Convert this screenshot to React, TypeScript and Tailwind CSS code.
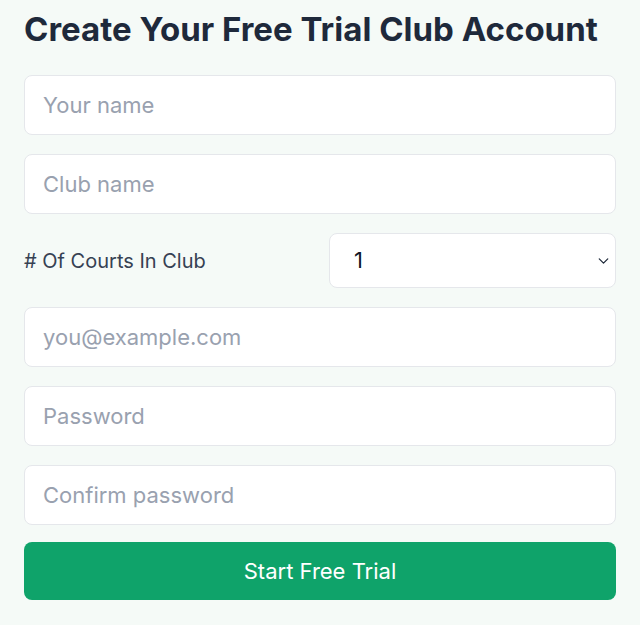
import { ChevronDown } from "lucide-react";

const inputClass =
  "h-[60px] w-full rounded-lg border border-gray-200 bg-white px-[18px] text-[22px] text-gray-900 placeholder:text-gray-400 outline-none";

export default function App() {
  return (
    <div
      className="min-h-[625px] bg-[#f5faf7] px-6 pt-[6px]"
      style={{ fontFamily: "Inter, 'Noto Sans', sans-serif" }}
    >
      <h1 className="text-[33px] font-bold leading-[46px] text-[#1e293b]">
        Create Your Free Trial Club Account
      </h1>
      <form className="mt-[23px] flex flex-col gap-[19px]">
        <input className={inputClass} placeholder="Your name" />
        <input className={inputClass} placeholder="Club name" />
        <div className="flex items-center">
          <label className="w-[305px] text-[20px] text-gray-700">
            # Of Courts In Club
          </label>
          <div className="relative flex-1">
            <select className="h-[55px] w-full appearance-none rounded-lg border border-gray-200 bg-white px-6 text-[22px] text-gray-900 outline-none">
              <option>1</option>
              <option>2</option>
              <option>3</option>
            </select>
            <ChevronDown
              className="pointer-events-none absolute right-[4px] top-1/2 -translate-y-1/2 text-gray-800"
              size={17}
              strokeWidth={1.75}
            />
          </div>
        </div>
        <input className={inputClass} placeholder="you@example.com" />
        <input className={inputClass} type="password" placeholder="Password" />
        <input className={inputClass} type="password" placeholder="Confirm password" />
        <button
          type="button"
          className="-mt-[2px] h-[58px] w-full rounded-lg bg-[#0fa36a] text-[22px] text-white"
        >
          Start Free Trial
        </button>
      </form>
    </div>
  );
}
